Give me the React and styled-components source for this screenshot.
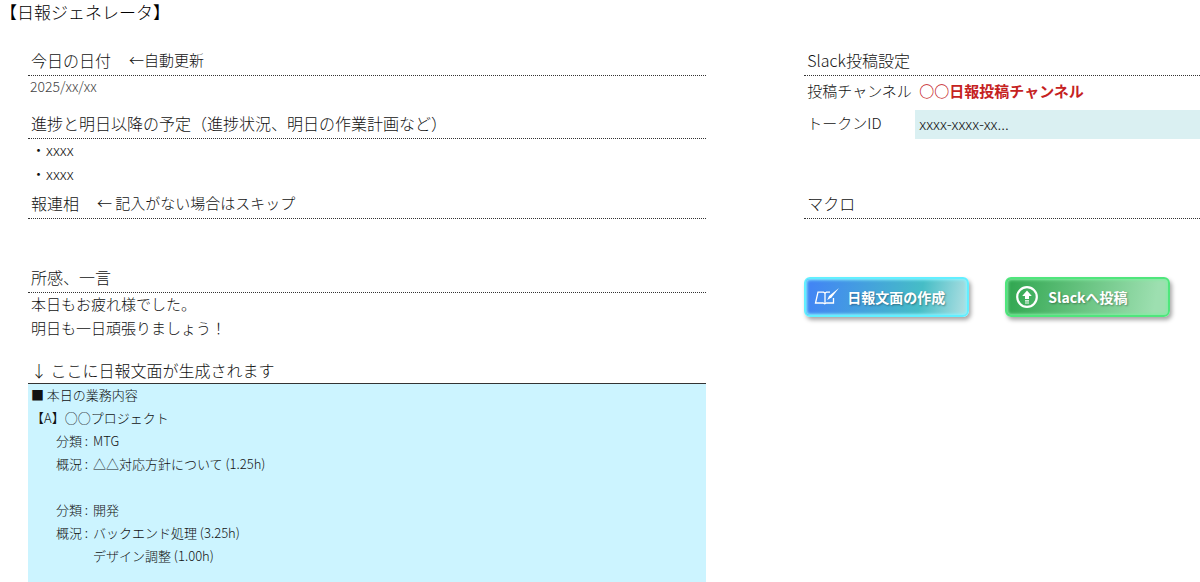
import React from 'react'
import styled, { createGlobalStyle } from 'styled-components';

const GlobalStyle = createGlobalStyle`
  body {
    margin: 0;
    background: #fff;
    color: #111;
    font-family: "Noto Sans CJK JP", "Noto Sans", sans-serif;
    font-weight: 300;
    font-size: 15px;
    line-height: 24px;
  }

  * {
    box-sizing: border-box;
  }
`

const Page = styled.div`
  display: flex;
  flex-direction: column;
  min-height: 100vh;
`;

const Title = styled.h1`
  margin: 0;
  font-size: 17px;
  font-weight: 300;
  line-height: 24px;
  color: #000;
`

const Columns = styled.main`
  flex: 1;
  display: grid;
  grid-template-columns: 12fr 7fr;
  column-gap: 98px;
  padding: 24px 0 0 28px;
`

const Column = styled.div`
  display: flex;
  flex-direction: column;
`

const Section = styled.section`
  display: flex;
  flex-direction: column;
  min-height: ${props => props.$height}px;
`

const Heading = styled.h2`
  display: flex;
  align-items: ${props => props.$solid ? 'center' : 'flex-start'};
  gap: 18px;
  margin: 0;
  padding: 0 3px;
  height: 28px;
  font-size: 16px;
  font-weight: 300;
  border-bottom: 1px ${props => props.$solid ? 'solid' : 'dotted'} #333;
`

const Note = styled.span`
  font-size: 15px;
`

const Text = styled.p`
  margin: -1px 0 0;
  padding: 0 3px;
  white-space: pre-wrap;
`

const DateText = styled.time`
  padding: 0 2px;
  font-size: 14px;
  line-height: 20px;
  color: #444;
`

const Report = styled.div`
  flex: 1;
  display: flex;
  flex-direction: column;
  padding: 0 3px 16px;
  background: #ccf4ff;
  font-size: 13px;
  line-height: 23px;
`

const ReportBody = styled.div`
  margin-top: -1px;
`

const ReportLine = styled.p`
  margin: 0;
`

const Entry = styled.dl`
  display: grid;
  grid-template-columns: 37px 1fr;
  margin: 0 0 23px;
  padding-left: 25px;

  dd {
    grid-column: 2;
    margin: 0;
  }
`

const Settings = styled.div`
  display: grid;
  grid-template-columns: 111px 1fr;
  align-items: center;
  row-gap: 1px;
`

const Label = styled.label`
  padding: 0 0 3px 3px;
`

const Channel = styled.output`
  padding: 0 0 3px 4px;
  line-height: 30px;
  font-weight: 700;
  color: #c5221f;
`

const Token = styled.input`
  width: 100%;
  height: 29px;
  padding: 0 4px 3px;
  border: 0;
  border-radius: 0;
  background: #daf0f2;
  color: #111;
  font: inherit;
`

const Actions = styled.div`
  display: flex;
  gap: 36px;
  padding-top: 6px;
`

const MacroButton = styled.button`
  display: flex;
  align-items: center;
  gap: ${props => props.$gap}px;
  width: 165px;
  height: 40px;
  padding: 0 8px;
  border: 2px solid ${props => props.$edge};
  border-radius: 6px;
  background: ${props => props.$fill};
  background-origin: border-box;
  box-shadow: inset 0 0 3px 1px ${props => props.$glow}, 2px 3px 4px rgba(0, 0, 0, 0.35);
  color: #fff;
  font: inherit;
  font-size: 14px;
  font-weight: 700;
  white-space: nowrap;
  text-shadow: 1px 1px 2px rgba(0, 0, 0, 0.35);
  cursor: pointer;
`

function BookIcon() {
  return (
    <svg width="26" height="20" viewBox="0 0 26 20" fill="none" stroke="#fff" strokeWidth="1.3" aria-hidden="true">
      <path d="M16 5.200h-3.500L11 6 9.500 5.200H4L1.500 16H9l1.700.8 1.800-.8h7V11" />
      <path d="M11 6v10.500" />
      <path d="M13.200 13l1.800-4L25 1l-7.500 9.500z" fill="#fff" stroke="none" />
    </svg>
  )
}

function UploadIcon() {
  return (
    <svg width="24" height="24" viewBox="0 0 24 24" fill="none" aria-hidden="true">
      <circle cx="12" cy="12" r="9.800" stroke="#fff" strokeWidth="2.200" />
      <path d="M12 5.500 16.800 11H14v3h-4v-3H7.200z" fill="#fff" />
      <path d="M10 15.800h4M10 18h4" stroke="#fff" strokeWidth="1.200" />
    </svg>
  )
}

const entries = [
  { kind: 'MTG', details: ['△△対応方針について (1.25h)'] },
  { kind: '開発', details: ['バックエンド処理 (3.25h)', 'デザイン調整 (1.00h)'] },
]

export default function App() {
  return (
    <Page>
      <GlobalStyle />
      <Title>【日報ジェネレータ】</Title>

      <Columns>
        <Column>
          <Section $height={63}>
            <Heading>今日の日付<Note>←自動更新</Note></Heading>
            <DateText>2025/xx/xx</DateText>
          </Section>
          <Section $height={80}>
            <Heading>進捗と明日以降の予定（進捗状況、明日の作業計画など）</Heading>
            <Text>{'・xxxx\n・xxxx'}</Text>
          </Section>
          <Section $height={74}>
            <Heading>報連相<Note>← 記入がない場合はスキップ</Note></Heading>
          </Section>
          <Section $height={91}>
            <Heading>所感、一言</Heading>
            <Text>{'本日もお疲れ様でした。\n明日も一日頑張りましょう！'}</Text>
          </Section>

          <Heading $solid>↓ ここに日報文面が生成されます</Heading>
          <Report>
            <ReportBody>
              <ReportLine>■ 本日の業務内容</ReportLine>
              <ReportLine>【A】○○プロジェクト</ReportLine>
              {entries.map(entry => (
                <Entry key={entry.kind}>
                  <dt>分類 :</dt>
                  <dd>{entry.kind}</dd>
                  <dt>概況 :</dt>
                  {entry.details.map(detail => <dd key={detail}>{detail}</dd>)}
                </Entry>
              ))}
            </ReportBody>
          </Report>
        </Column>

        <Column>
          <Section $height={143}>
            <Heading>Slack投稿設定</Heading>
            <Settings>
              <Label htmlFor="channel">投稿チャンネル</Label>
              <Channel id="channel">○○日報投稿チャンネル</Channel>
              <Label htmlFor="token">トークンID</Label>
              <Token id="token" type="text" defaultValue="xxxx-xxxx-xx..." />
            </Settings>
          </Section>
          <Section $height={80}>
            <Heading>マクロ</Heading>
          </Section>
          <Actions>
            <MacroButton
              type="button"
              $gap={7}
              $edge="#62efff"
              $glow="#8bf3ff"
              $fill="linear-gradient(100deg, #4285f4 5%, #46bdc6 70%, #a8dde0 96%)"
            >
              <BookIcon />日報文面の作成
            </MacroButton>
            <MacroButton
              type="button"
              $gap={9}
              $edge="#4fe67c"
              $glow="#83eda3"
              $fill="linear-gradient(100deg, #34a853 5%, #9ddfb0 90%)"
            >
              <UploadIcon />Slackへ投稿
            </MacroButton>
          </Actions>
        </Column>
      </Columns>
    </Page>
  )
}
